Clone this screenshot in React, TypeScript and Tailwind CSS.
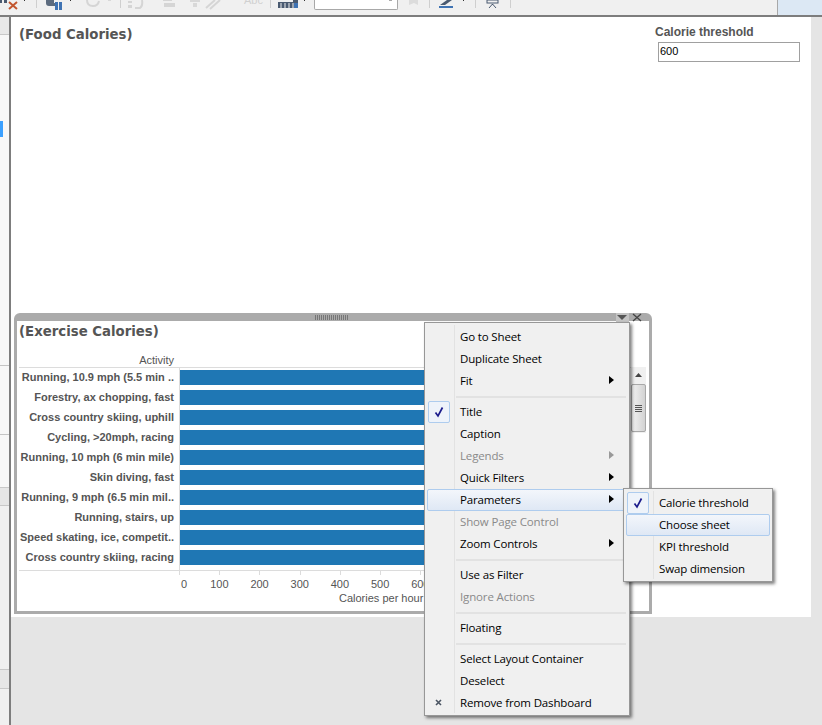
import React from 'react';

const activities = [
  'Running, 10.9 mph (5.5 min ..',
  'Forestry, ax chopping, fast',
  'Cross country skiing, uphill',
  'Cycling, >20mph, racing',
  'Running, 10 mph (6 min mile)',
  'Skin diving, fast',
  'Running, 9 mph (6.5 min mil..',
  'Running, stairs, up',
  'Speed skating, ice, competit..',
  'Cross country skiing, racing',
];

const ticks = ['0', '100', '200', '300', '400', '500', '600'];

function Arrow({ muted }: { muted?: boolean }) {
  return (
    <svg width="5" height="8" viewBox="0 0 5 8" className="absolute right-[15px] top-[6px]">
      <path d="M0 0L5 4L0 8Z" fill={muted ? '#999' : '#000'} />
    </svg>
  );
}

function Check() {
  return (
    <svg width="10" height="12" viewBox="0 0 10 12">
      <path d="M1.5 6.5L4 10L8.5 1.5" fill="none" stroke="#1c1c8c" strokeWidth="1.7" />
    </svg>
  );
}

function MenuItem({
  label,
  muted,
  arrow,
  active,
  checked,
  mark,
}: {
  label: string;
  muted?: boolean;
  arrow?: boolean;
  active?: boolean;
  checked?: boolean;
  mark?: boolean;
}) {
  return (
    <div
      className={`relative h-[22px] pl-[35px] text-[11.5px] leading-[22px] tracking-[-0.15px] ${muted ? 'text-[#8a8a8a]' : 'text-black'}`}
    >
      {active && (
        <div className="absolute inset-x-[2px] inset-y-0 rounded-[2px] border border-[#aeccee] bg-gradient-to-b from-[#f3f6fb] to-[#dfe8f5]" />
      )}
      {checked && (
        <div className="absolute left-[3px] top-0 flex h-[22px] w-[22px] items-center justify-center rounded-[2px] border border-[#aeccee] bg-[#eef3fa]">
          <Check />
        </div>
      )}
      {mark && (
        <svg width="7" height="7" viewBox="0 0 7 7" className="absolute left-[10px] top-[7px]">
          <path d="M1 1L6 6M6 1L1 6" stroke="#4b5563" strokeWidth="1.6" />
        </svg>
      )}
      <span className="relative">{label}</span>
      {arrow && <Arrow muted={muted} />}
    </div>
  );
}

function Separator() {
  return <div className="mb-[3px] ml-[31px] mr-[3px] mt-[4px] h-[2px] bg-[#e2e2e2]" />;
}

function ToolSep() {
  return <div className="h-[8px] w-px shrink-0 bg-[#cfcfcf]" />;
}

function Toolbar() {
  return (
    <div className="flex h-[15px] items-start overflow-hidden bg-[#f0f0f0]">
      <svg width="30" height="10" viewBox="0 0 30 10" className="shrink-0">
        <rect x="0" y="0" width="2" height="3" fill="#4a5a70" />
        <rect x="4" y="0" width="3" height="3" fill="#4a5a70" />
        <path d="M9 2L17 9M17 2L9 9" stroke="#c2562f" strokeWidth="2" />
        <rect x="24" y="0" width="1" height="1" fill="#333" />
      </svg>
      <div className="ml-[6px]"><ToolSep /></div>
      <svg width="38" height="10" viewBox="0 0 38 10" className="ml-[9px] shrink-0">
        <path d="M0 0H8V3H9V6H3Q0 6 0 3Z" fill="#5c6b7e" />
        <rect x="9" y="2" width="3" height="8" fill="#3f73b3" />
        <rect x="13" y="2" width="3" height="8" fill="#3f73b3" />
        <rect x="24" y="0" width="1" height="1" fill="#333" />
      </svg>
      <svg width="35" height="9" viewBox="0 0 35 9" className="ml-[1px] shrink-0">
        <path d="M2 0Q2 6 8 6Q13 6 14 1" fill="none" stroke="#d5d5d5" strokeWidth="2" />
        <rect x="23" y="0" width="3" height="1" fill="#d8d8d8" />
      </svg>
      <ToolSep />
      <svg width="100" height="10" viewBox="0 0 100 10" className="ml-[7px] shrink-0">
        <rect x="0" y="1" width="4" height="2" fill="#d5d5d5" />
        <rect x="0" y="5" width="4" height="3" fill="#d5d5d5" />
        <path d="M7 8L12 8Q15 6 14 0" fill="none" stroke="#d5d5d5" strokeWidth="2" />
        <rect x="35" y="0" width="9" height="1" fill="#d5d5d5" />
        <rect x="36" y="3" width="11" height="4" fill="#d5d5d5" />
        <rect x="62" y="0" width="10" height="2" fill="#d8d8d8" />
        <rect x="65" y="3" width="4" height="4" fill="#d8d8d8" />
        <path d="M78 8L87 0M82 9L92 0" fill="none" stroke="#d5d5d5" strokeWidth="2" />
      </svg>
      <span className="ml-[16px] mt-[-7px] w-[20px] shrink-0 font-['Liberation_Sans',sans-serif] text-[11px] leading-[14px] text-[#d0d0d0]">
        Abc
      </span>
      <div className="ml-[6px]"><ToolSep /></div>
      <svg width="34" height="8" viewBox="0 0 34 8" className="ml-[7px] shrink-0">
        <path d="M0 2H19V8H0Z" fill="#4a5a70" />
        <path d="M3 3V8M7 3V8M11 3V8M15 3V8" stroke="#f0f0f0" strokeWidth="1" />
        <rect x="15" y="0" width="5" height="3" fill="#4a5a70" />
        <rect x="16" y="3" width="4" height="5" fill="#3f73b3" />
        <rect x="26" y="0" width="1" height="1" fill="#333" />
      </svg>
      <div className="relative ml-[2px] h-[10px] w-[84px] shrink-0 rounded-b-[2px] border border-t-0 border-[#a8a8a8] bg-white">
        <div className="absolute right-[5px] top-0 h-[1px] w-[3px] bg-[#aaa]" />
      </div>
      <svg width="20" height="6" viewBox="0 0 20 6" className="ml-[11px] shrink-0">
        <path d="M0 0H9V5L5 3L0 5Z" fill="#dcdcdc" />
      </svg>
      <ToolSep />
      <svg width="36" height="8" viewBox="0 0 36 8" className="ml-[9px] shrink-0">
        <path d="M1 5L8 0H13L6 5Z" fill="#4a5a70" />
        <rect x="0" y="6" width="14" height="2" fill="#3f73b3" />
        <rect x="24" y="0" width="1" height="1" fill="#333" />
      </svg>
      <ToolSep />
      <svg width="24" height="9" viewBox="0 0 24 9" className="ml-[10px] shrink-0">
        <rect x="1" y="0" width="11" height="3" fill="none" stroke="#4a5a70" />
        <path d="M6.5 4V5M3 8L6.5 4L10 8" fill="none" stroke="#4a5a70" />
      </svg>
      <ToolSep />
      <div className="ml-auto h-full w-[45px] border-l border-[#a8a8a8] bg-[#dce8f4]" />
    </div>
  );
}

function Sidebar() {
  return (
    <div className="flex w-[9px] shrink-0 flex-col bg-[#f7f7f7]">
      <div className="h-[18px] border-b border-[#c8c8c8] bg-[#e8e8e8]" />
      <div className="mt-[86px] h-[16px] w-[3px] bg-[#3ba0ff]" />
      <div className="mt-[228px] h-px bg-[#c4c4c4]" />
      <div className="mt-[68px] h-px bg-[#c4c4c4]" />
      <div className="mt-[52px] h-[19px] border-y border-[#c8c8c8] bg-[#e6e6e6]" />
      <div className="flex flex-1 flex-col bg-[#f0f0f0]">
        <div className="mt-[163px] h-[20px] border-y border-[#c8c8c8] bg-[#e6e6e6]" />
      </div>
    </div>
  );
}

function ExerciseChart() {
  return (
    <div className="ml-[3px] mt-[251px] h-[301px] w-[638px] rounded-t-[6px] border-x-[3px] border-b-[3px] border-t-[8px] border-[#ababab] bg-white">
      <div className="relative h-0">
        <div className="absolute left-[298px] top-[-6px] h-[5px] w-[34px] bg-[repeating-linear-gradient(90deg,#777_0,#777_1px,transparent_1px,transparent_2px)]" />
      </div>
      <div className="ml-[2px] mt-[2px] font-['DejaVu_Sans',sans-serif] text-[13.3px] font-bold leading-[18px] text-[#555]">
        (Exercise Calories)
      </div>
      <div className="mt-[12px] flex h-[14px] w-[157px] items-center justify-end font-['Liberation_Sans',sans-serif] text-[11px] text-[#555]">
        Activity
      </div>
      <div className="ml-[2px] flex h-[204px] w-[620px] border-y border-[#dcdcdc] font-['Liberation_Sans',sans-serif]">
        <div className="flex w-[161px] shrink-0 flex-col border-r border-[#dcdcdc]">
          {activities.map((name) => (
            <div
              key={name}
              className="flex h-[20px] items-center justify-end pb-[2px] pr-[5px] text-[11px] font-bold whitespace-nowrap text-[#555]"
            >
              {name}
            </div>
          ))}
        </div>
        <div className="flex flex-1 flex-col gap-[5px] pt-[2px]">
          {activities.map((name) => (
            <div key={name} className="h-[15px] w-[440px] bg-[#1f77b4]" />
          ))}
        </div>
      </div>
      <div className="ml-[162px] flex h-[14px] font-['Liberation_Sans',sans-serif] text-[11px] leading-[14px] text-[#555]">
        {ticks.map((t) => (
          <div key={t} className="relative h-[4px] w-[40.2px] shrink-0 border-l border-[#dcdcdc]">
            <span className={`absolute top-[6px] ${t === '0' ? 'left-[1px]' : 'left-[-10px]'}`}>{t}</span>
          </div>
        ))}
      </div>
      <div className="ml-[322px] mt-[6px] w-[100px] font-['Liberation_Sans',sans-serif] text-[11px] leading-[14px] text-[#555]">
        Calories per hour
      </div>
    </div>
  );
}

function ContextMenu() {
  return (
    <div className="absolute left-[424px] top-[322px] h-[394px] w-[206px] border border-[#979797] bg-[#f0f0f0] py-[3px] font-['Open_Sans',sans-serif] shadow-[2px_2px_3px_rgba(0,0,0,0.5)]">
      <div className="absolute bottom-[2px] left-[29px] top-[2px] w-px bg-[#e2e2e2]" />
      <MenuItem label="Go to Sheet" />
      <MenuItem label="Duplicate Sheet" />
      <MenuItem label="Fit" arrow />
      <Separator />
      <MenuItem label="Title" checked />
      <MenuItem label="Caption" />
      <MenuItem label="Legends" muted arrow />
      <MenuItem label="Quick Filters" arrow />
      <MenuItem label="Parameters" arrow active />
      <MenuItem label="Show Page Control" muted />
      <MenuItem label="Zoom Controls" arrow />
      <Separator />
      <MenuItem label="Use as Filter" />
      <MenuItem label="Ignore Actions" muted />
      <Separator />
      <MenuItem label="Floating" />
      <Separator />
      <MenuItem label="Select Layout Container" />
      <MenuItem label="Deselect" />
      <MenuItem label="Remove from Dashboard" mark />
    </div>
  );
}

function SubMenu() {
  return (
    <div className="absolute left-[623px] top-[488px] h-[94px] w-[150px] border border-[#979797] bg-[#f0f0f0] py-[3px] font-['Open_Sans',sans-serif] shadow-[2px_2px_3px_rgba(0,0,0,0.5)]">
      <div className="absolute bottom-[2px] left-[29px] top-[2px] w-px bg-[#e2e2e2]" />
      <MenuItem label="Calorie threshold" checked />
      <MenuItem label="Choose sheet" active />
      <MenuItem label="KPI threshold" />
      <MenuItem label="Swap dimension" />
    </div>
  );
}

export default function App() {
  return (
    <div className="relative h-[725px] w-[822px] overflow-hidden bg-[#e5e5e5]">
      <Toolbar />
      <div className="h-[2px] bg-[#7d7d7d]" />
      <div className="flex h-[708px]">
        <Sidebar />
        <div className="w-[2px] shrink-0 bg-[#7d7d7d]" />
        <div className="h-[600px] w-[800px] shrink-0 bg-white">
          <div className="flex justify-between">
            <div className="ml-[8px] mt-[9px] font-['DejaVu_Sans',sans-serif] text-[13.3px] font-bold leading-[18px] text-[#555]">
              (Food Calories)
            </div>
            <div className="mr-[11px] mt-[7px] w-[145px] font-['Liberation_Sans',sans-serif]">
              <div className="text-[12px] font-bold leading-[16px] text-[#555]">Calorie threshold</div>
              <div className="ml-[3px] mt-[2px] h-[20px] w-[142px] border border-[#a0a0a0] bg-white pl-[1px] text-[11px] leading-[17px] text-black">
                600
              </div>
            </div>
          </div>
          <ExerciseChart />
        </div>
      </div>
      <div className="absolute left-[616px] top-[313px] h-[9px] w-[13px] bg-[#c4c4c4]">
        <svg width="10" height="6" viewBox="0 0 10 6" className="ml-[1px] mt-[2px]">
          <path d="M0 0H10L5 5Z" fill="#555" />
        </svg>
      </div>
      <svg width="10" height="9" viewBox="0 0 10 9" className="absolute left-[632px] top-[313px]">
        <path d="M1 1L9 8M9 1L1 8" stroke="#444" strokeWidth="1.3" />
      </svg>
      <div className="absolute left-[631px] top-[367px] h-[66px] w-[15px] bg-[#f0f0f0]">
        <svg width="7" height="4" viewBox="0 0 7 4" className="ml-[4px] mt-[6px]">
          <path d="M0 4L3.5 0L7 4Z" fill="#444" />
        </svg>
        <div className="mt-[7px] flex h-[48px] w-[15px] flex-col items-center justify-center gap-[1px] rounded-[2px] border border-[#a8a8a8] bg-gradient-to-r from-[#f2f2f2] to-[#d2d2d2]">
          <div className="h-px w-[7px] bg-[#555]" />
          <div className="h-px w-[7px] bg-[#555]" />
          <div className="h-px w-[7px] bg-[#555]" />
          <div className="h-px w-[7px] bg-[#555]" />
        </div>
      </div>
      <ContextMenu />
      <SubMenu />
    </div>
  );
}
